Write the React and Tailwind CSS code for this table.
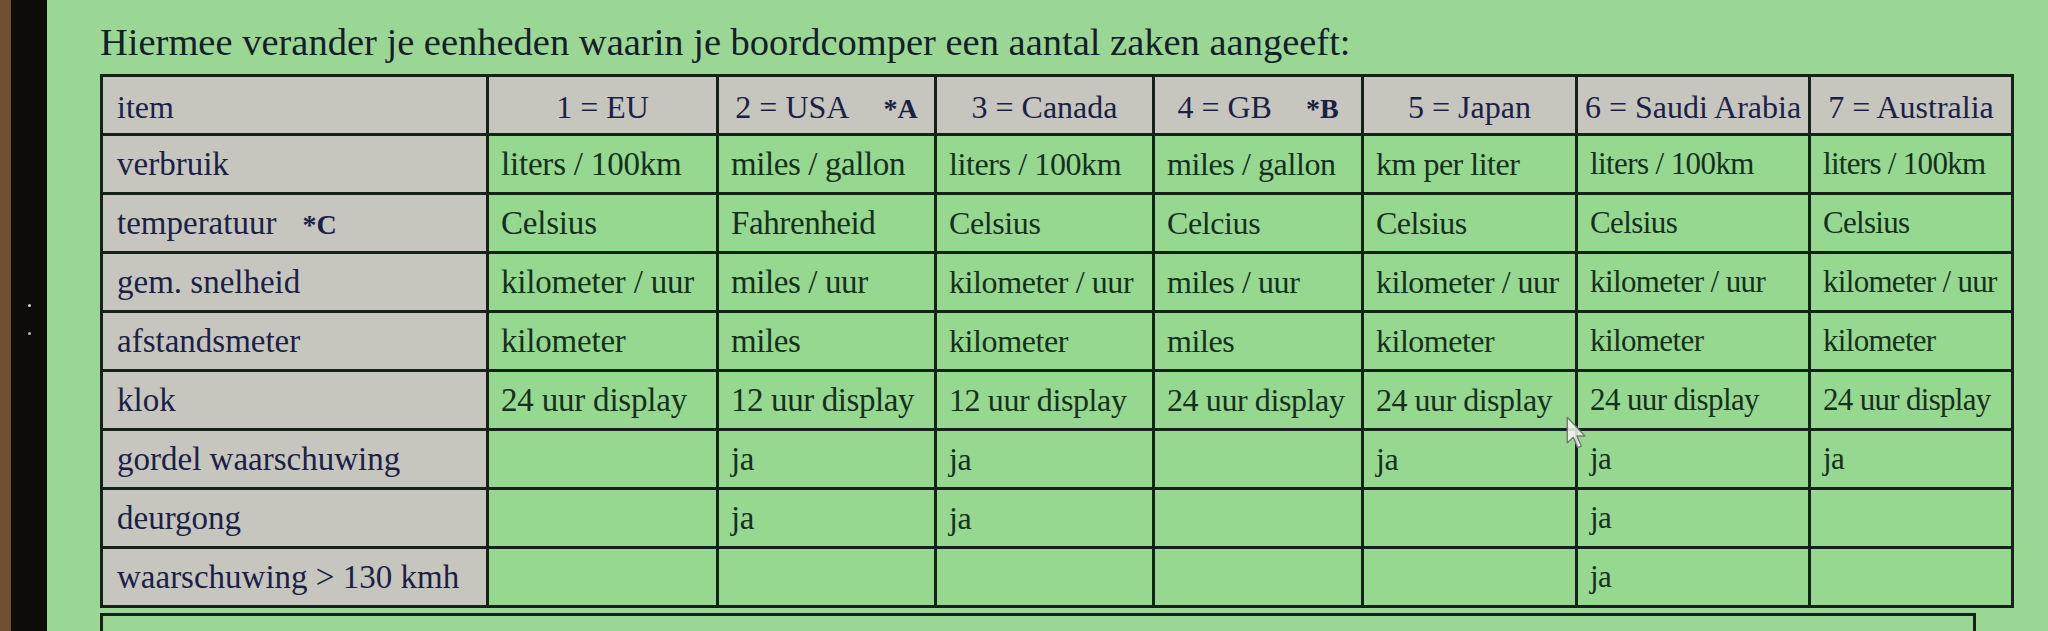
import React from "react";

const header = [
  { label: "item", align: "left" },
  { label: "1 = EU" },
  { label: "2 = USA", mark: "*A" },
  { label: "3 = Canada" },
  { label: "4 = GB", mark: "*B" },
  { label: "5 = Japan" },
  { label: "6 = Saudi Arabia" },
  { label: "7 = Australia" },
];

const rows = [
  { item: "verbruik", cells: ["liters / 100km", "miles / gallon", "liters / 100km", "miles / gallon", "km per liter", "liters / 100km", "liters / 100km"] },
  { item: "temperatuur", mark: "*C", cells: ["Celsius", "Fahrenheid", "Celsius", "Celcius", "Celsius", "Celsius", "Celsius"] },
  { item: "gem. snelheid", cells: ["kilometer / uur", "miles / uur", "kilometer / uur", "miles / uur", "kilometer / uur", "kilometer / uur", "kilometer / uur"] },
  { item: "afstandsmeter", cells: ["kilometer", "miles", "kilometer", "miles", "kilometer", "kilometer", "kilometer"] },
  { item: "klok", cells: ["24 uur display", "12 uur display", "12 uur display", "24 uur display", "24 uur display", "24 uur display", "24 uur display"] },
  { item: "gordel waarschuwing", cells: ["", "ja", "ja", "", "ja", "ja", "ja"] },
  { item: "deurgong", cells: ["", "ja", "ja", "", "", "ja", ""] },
  { item: "waarschuwing > 130 kmh", cells: ["", "", "", "", "", "ja", ""] },
];

// the photo squeezes the right-hand columns a little
const colText = [
  "text-[33px] tracking-[-0.2px]",
  "text-[33px] tracking-[-0.4px]",
  "text-[32px] tracking-[-0.4px]",
  "text-[32px] tracking-[-0.4px]",
  "text-[32px] tracking-[-0.5px]",
  "text-[31px] tracking-[-0.6px]",
  "text-[31px] tracking-[-0.7px]",
];

const Cursor = () => (
  <svg className="absolute left-[1518px] top-[416px]" width="24" height="34" viewBox="0 0 18 28">
    <path
      d="M1 1 L1 22 L6 17.5 L9.5 26 L12.5 24.8 L9 16.5 L15.5 16.5 Z"
      fill="#f4f6f2"
      fillOpacity="0.85"
      stroke="#6f7a6c"
      strokeWidth="1.1"
      strokeLinejoin="round"
    />
  </svg>
);

export default function App() {
  return (
    <div className="flex h-[631px] w-[2048px] overflow-hidden font-['Liberation_Serif','Times_New_Roman',serif]">
      {/* monitor bezel */}
      <div className="w-[11px] bg-[#6e4f2f]" />
      <div className="flex w-[36px] flex-col items-center gap-[25px] bg-[#0e0b09] pt-[304px]">
        <span className="h-[3px] w-[3px] rounded-full bg-[#d8d4c8]" />
        <span className="h-[3px] w-[3px] rounded-full bg-[#bdb8ad]" />
      </div>

      {/* screen */}
      <div className="relative flex-1 bg-[#9bd794] pl-[53px] pt-[23px]">
        <h1 className="text-[38.5px] leading-[39px] text-[#13202a]">
          Hiermee verander je eenheden waarin je boordcomper een aantal zaken aangeeft:
        </h1>

        <div className="mt-[12px] grid w-[1914px] grid-cols-[383px_227px_215px_215px_206px_211px_230px_200px] gap-[3px] bg-[#15221a] p-[3px] text-[32px] leading-[56px]">
          {header.map((h) => (
            <div
              key={h.label}
              className={`h-[56px] whitespace-nowrap bg-[#c6c6bf] pt-[2px] text-[#1c1f46] ${
                h.align === "left" ? "pl-[14px] text-left" : "text-center"
              }`}
            >
              {h.label}
              {h.mark && <span className="ml-[34px] text-[28px] font-bold">{h.mark}</span>}
            </div>
          ))}

          {rows.map((r) => (
            <React.Fragment key={r.item}>
              <div className="h-[56px] whitespace-nowrap bg-[#c6c6bf] pl-[14px] text-[33px] text-[#1c1f46]">
                {r.item}
                {r.mark && <span className="ml-[26px] text-[28px] font-bold">{r.mark}</span>}
              </div>
              {r.cells.map((c, i) => (
                <div
                  key={i}
                  className={`h-[56px] whitespace-nowrap bg-[#96d88f] pl-[12px] text-[#15301d] ${colText[i]}`}
                >
                  {c}
                </div>
              ))}
            </React.Fragment>
          ))}
        </div>

        <div className="mt-[5px] h-[30px] w-[1876px] border-[3px] border-b-0 border-[#15221a]" />

        <Cursor />
      </div>
    </div>
  );
}
